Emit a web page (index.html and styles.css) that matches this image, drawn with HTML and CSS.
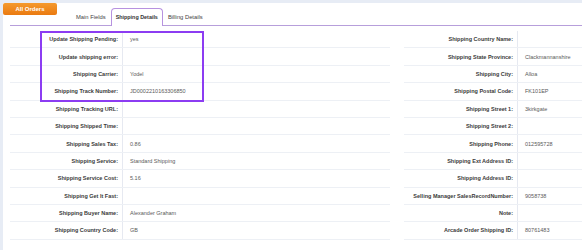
FILE: index.html
```html
<!DOCTYPE html>
<html>
    <head>
        <meta name="viewport" content="width=device-width, initial-scale=1.0">
        <title>Order Details</title>
        <link rel="stylesheet" href="styles.css">
    </head>
    <body>
        <div class="panel">
            <div class="header">
                <a href="#" class="btn-orders">All Orders</a>
                <div class="tabs">
                    <a href="#" class="tab">Main Fields</a>
                    <a href="#" class="tab active">Shipping Details</a>
                    <a href="#" class="tab">Billing Details</a>
                </div>
            </div>
            <div class="fields">
                <div class="table left">
                    <div class="highlight"></div>
                    <div class="row"><span class="label">Update Shipping Pending:</span><span class="value">yes</span></div>
                    <div class="row"><span class="label">Update shipping error:</span><span class="value"></span></div>
                    <div class="row"><span class="label">Shipping Carrier:</span><span class="value">Yodel</span></div>
                    <div class="row"><span class="label">Shipping Track Number:</span><span class="value">JD0002210163306850</span></div>
                    <div class="row"><span class="label">Shipping Tracking URL:</span><span class="value"></span></div>
                    <div class="row"><span class="label">Shipping Shipped Time:</span><span class="value"></span></div>
                    <div class="row"><span class="label">Shipping Sales Tax:</span><span class="value">0.86</span></div>
                    <div class="row"><span class="label">Shipping Service:</span><span class="value">Standard Shipping</span></div>
                    <div class="row"><span class="label">Shipping Service Cost:</span><span class="value">5.16</span></div>
                    <div class="row"><span class="label">Shipping Get It Fast:</span><span class="value"></span></div>
                    <div class="row"><span class="label">Shipping Buyer Name:</span><span class="value">Alexander Graham</span></div>
                    <div class="row"><span class="label">Shipping Country Code:</span><span class="value">GB</span></div>
                </div>
                <div class="table right">
                    <div class="row"><span class="label">Shipping Country Name:</span><span class="value"></span></div>
                    <div class="row"><span class="label">Shipping State Province:</span><span class="value">Clackmannanshire</span></div>
                    <div class="row"><span class="label">Shipping City:</span><span class="value">Alloa</span></div>
                    <div class="row"><span class="label">Shipping Postal Code:</span><span class="value">FK101EP</span></div>
                    <div class="row"><span class="label">Shipping Street 1:</span><span class="value">3kirkgate</span></div>
                    <div class="row"><span class="label">Shipping Street 2:</span><span class="value"></span></div>
                    <div class="row"><span class="label">Shipping Phone:</span><span class="value">012595728</span></div>
                    <div class="row"><span class="label">Shipping Ext Address ID:</span><span class="value"></span></div>
                    <div class="row"><span class="label">Shipping Address ID:</span><span class="value"></span></div>
                    <div class="row"><span class="label">Selling Manager SalesRecordNumber:</span><span class="value">9058738</span></div>
                    <div class="row"><span class="label">Note:</span><span class="value"></span></div>
                    <div class="row"><span class="label">Arcade Order Shipping ID:</span><span class="value">80761483</span></div>
                </div>
            </div>
        </div>
    </body>
</html>
```

FILE: styles.css
```css
html,body{
    height:100%;
}
body{
    margin:0;
    background-color:#e7ecf5;
    font-family:"Liberation Sans",Arial,sans-serif;
    overflow:hidden;
}
a{
    text-decoration:none;
}
.panel{
    margin:3px 0 0 3px;
    padding-left:7px;
    background-color:#fff;
    height:100%;
}
.header{
    display:flex;
    align-items:flex-start;
    height:22px;
    border-bottom:1px solid #b79fdb;
}
.btn-orders{
    margin-left:-7px;
    width:54px;
    height:12px;
    line-height:12px;
    text-align:center;
    font-size:6px;
    font-weight:bold;
    color:#fff;
    border-radius:2px;
    background-image:linear-gradient(#f59a2e,#ea7a10);
}
.tabs{
    display:flex;
    align-self:flex-end;
    margin-left:14px;
    margin-bottom:-1px;
}
.tab{
    display:block;
    height:16px;
    line-height:17px;
    padding:0 4px;
    font-size:5.8px;
    color:#444;
    border:1px solid transparent;
    border-bottom:none;
}
.tab.active{
    font-size:5.4px;
    font-weight:bold;
    color:#333;
    background-color:#fff;
    border-color:#b792e0;
    border-radius:4px 4px 0 0;
    height:17px;
}
.fields{
    display:grid;
    grid-template-columns:380px 1fr;
    column-gap:14px;
    margin-top:5px;
}
.table{
    position:relative;
    min-width:0;
}
.row{
    display:grid;
    grid-template-columns:113px 1fr;
    height:17.4px;
    box-sizing:border-box;
    border-bottom:1px solid #edf0f5;
}
.right .row{
    grid-template-columns:114px 1fr;
}
.label,.value{
    display:flex;
    align-items:center;
    font-size:5.5px;
    white-space:nowrap;
}
.label{
    justify-content:flex-end;
    padding-right:4px;
    font-weight:bold;
    color:#3a3a3a;
    border-right:1px solid #e6e9f1;
}
.value{
    padding-left:7px;
    color:#5a5a5a;
}
.highlight{
    position:absolute;
    left:30px;
    top:0;
    width:164px;
    height:71px;
    box-sizing:border-box;
    border:2px solid #8c3cf2;
    pointer-events:none;
}
```
